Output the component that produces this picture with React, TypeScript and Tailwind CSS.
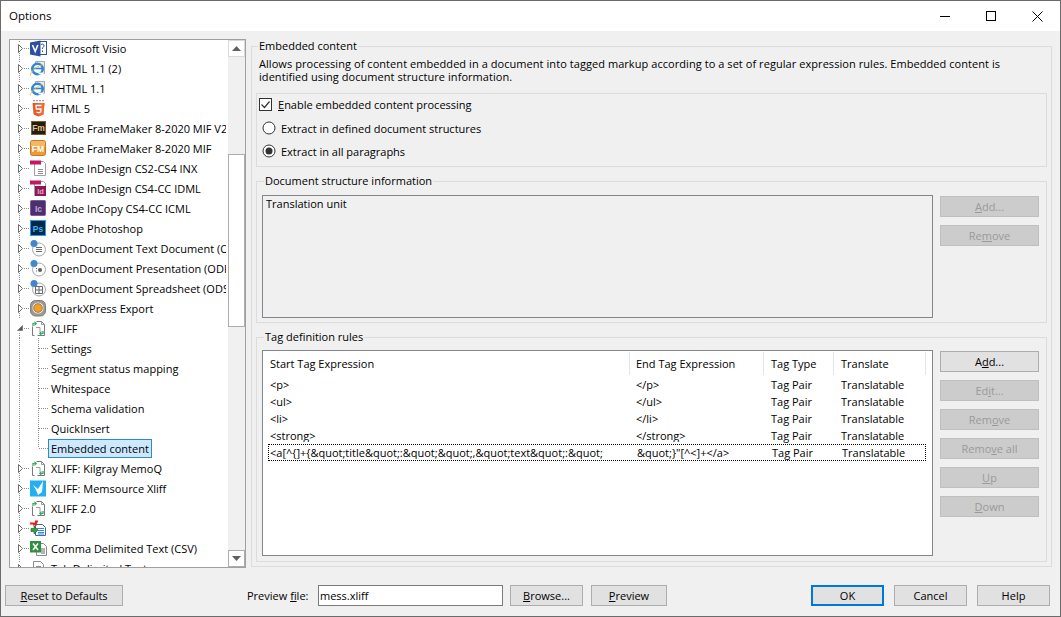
import type { ReactNode } from "react";

type IconName =
  | "visio" | "ie" | "html5" | "fmDark" | "fmOrange" | "inx" | "idml" | "incopy" | "ps"
  | "odt" | "odp" | "ods" | "quark" | "xliff" | "memsource" | "pdf" | "csv" | "tab";

type TreeRow = { label: string; icon?: IconName; open?: boolean; last?: boolean; selected?: boolean };

const treeRows: TreeRow[] = [
  { label: "Microsoft Visio", icon: "visio" },
  { label: "XHTML 1.1 (2)", icon: "ie" },
  { label: "XHTML 1.1", icon: "ie" },
  { label: "HTML 5", icon: "html5" },
  { label: "Adobe FrameMaker 8-2020 MIF V2", icon: "fmDark" },
  { label: "Adobe FrameMaker 8-2020 MIF", icon: "fmOrange" },
  { label: "Adobe InDesign CS2-CS4 INX", icon: "inx" },
  { label: "Adobe InDesign CS4-CC IDML", icon: "idml" },
  { label: "Adobe InCopy CS4-CC ICML", icon: "incopy" },
  { label: "Adobe Photoshop", icon: "ps" },
  { label: "OpenDocument Text Document (ODT)", icon: "odt" },
  { label: "OpenDocument Presentation (ODP)", icon: "odp" },
  { label: "OpenDocument Spreadsheet (ODS)", icon: "ods" },
  { label: "QuarkXPress Export", icon: "quark" },
  { label: "XLIFF", icon: "xliff", open: true },
  { label: "Settings" },
  { label: "Segment status mapping" },
  { label: "Whitespace" },
  { label: "Schema validation" },
  { label: "QuickInsert" },
  { label: "Embedded content", last: true, selected: true },
  { label: "XLIFF: Kilgray MemoQ", icon: "xliff" },
  { label: "XLIFF: Memsource Xliff", icon: "memsource" },
  { label: "XLIFF 2.0", icon: "xliff" },
  { label: "PDF", icon: "pdf" },
  { label: "Comma Delimited Text (CSV)", icon: "csv" },
  { label: "Tab Delimited Text", icon: "tab" },
];

const tagRows = [
  ["<p>", "</p>"],
  ["<ul>", "</ul>"],
  ["<li>", "</li>"],
  ["<strong>", "</strong>"],
  ['<a[^{]+{&quot;title&quot;:&quot;&quot;,&quot;text&quot;:&quot;', '&quot;}"[^<]+</a>'],
];

const columns = "grid grid-cols-[362px_134px_70px_92px]";

function Dots({ d }: { d: string }) {
  return <path d={d} stroke="#8f8f8f" strokeDasharray="1 1" fill="none" shapeRendering="crispEdges" />;
}

function FileIcon({ name }: { name: IconName }) {
  const odfBase = (
    <>
      <circle cx="9" cy="9.500" r="6.500" fill="#fbfbfb" stroke="#a8a8a8" />
      <circle cx="4" cy="3.500" r="3.500" fill="#3f88cf" />
    </>
  );

  let body: ReactNode = null;
  switch (name) {
    case "visio":
      body = (
        <>
          <rect x="9" y="1.500" width="7.500" height="13" fill="#fff" stroke="#2f5597" />
          <path d="M11 4.500c2-1 3.500 0 3 1.500s-1.500 1-1.500 3M12.500 10.500v1.500" fill="none" stroke="#2f5597" />
          <path d="M0 2.500l10.500-2v16L0 14.500z" fill="#2c4f9f" />
          <path d="M2.500 5l2.700 6.500L7.800 5" fill="none" stroke="#fff" strokeWidth="1.600" />
        </>
      );
      break;
    case "ie":
      body = (
        <>
          <path d="M5.500 1.500h9v12h-9z" fill="#ececec" stroke="#a8a8a8" />
          <circle cx="7.500" cy="9" r="5.200" fill="#fff" stroke="#2e86d8" strokeWidth="2.600" />
          <path d="M3.500 8.500h8.500" stroke="#2e86d8" strokeWidth="1.600" />
          <path d="M8.500 13.500h5" stroke="#fff" strokeWidth="1.800" />
          <path d="M.5 15.500c-1-3 6-9 12-11" fill="none" stroke="#e8b93c" strokeWidth="0.900" />
        </>
      );
      break;
    case "html5":
      body = (
        <>
          <path d="M3 .5h11" stroke="#9a9a9a" strokeWidth="1.400" strokeDasharray="2 1" />
          <path d="M2.500 3h12l-1.100 11.500-5 2-4.800-2z" fill="#e4572b" />
          <path d="M8.500 3h6l-1.100 11.500-4.900 2z" fill="#f26a35" />
          <path d="M11.500 5.500H6l.3 3.500h4.700l-.3 3-2.200.8-2.200-.8" fill="none" stroke="#fff" strokeWidth="1.300" />
        </>
      );
      break;
    case "fmDark":
      body = (
        <>
          <rect x="1.500" y="1.500" width="14" height="13" fill="#2b1c07" stroke="#70603c" />
          <text x="8.500" y="11.300" textAnchor="middle" fontSize="8.500" fontWeight="700" fill="#d8c48f" fontFamily="Liberation Sans, sans-serif">Fm</text>
        </>
      );
      break;
    case "fmOrange":
      body = (
        <>
          <rect x="0.500" y="0.500" width="15" height="15" rx="2" fill="#ee9a35" stroke="#c87a1f" />
          <rect x="1" y="1" width="14" height="6" rx="1.500" fill="#f6b765" />
          <text x="8" y="11.500" textAnchor="middle" fontSize="8.500" fontWeight="700" fill="#fff" fontFamily="Liberation Sans, sans-serif">FM</text>
        </>
      );
      break;
    case "inx":
      body = (
        <>
          <path d="M4.500 1.500h9l2 2v12h-11z" fill="#fff" stroke="#a0a0a0" />
          <rect x="0" y="0.500" width="11" height="4" fill="#c2185f" />
          <path d="M8 9.500h5M8 11.500h5M8 13.500h5" stroke="#8e8e8e" />
        </>
      );
      break;
    case "idml":
      body = (
        <>
          <path d="M4.500 1.500h9l2 2v12h-11z" fill="#fff" stroke="#a0a0a0" />
          <rect x="0" y="0.500" width="11" height="4" fill="#c2185f" />
          <rect x="5" y="6" width="11" height="10" fill="#8c1a58" />
          <text x="10.500" y="14" textAnchor="middle" fontSize="7.500" fontWeight="700" fill="#f0a0c8" fontFamily="Liberation Sans, sans-serif">Id</text>
        </>
      );
      break;
    case "incopy":
      body = (
        <>
          <rect x="0.500" y="0.500" width="15" height="15" rx="1" fill="#4d2f6e" stroke="#7a5f96" />
          <text x="8.500" y="11.500" textAnchor="middle" fontSize="8.500" fontWeight="700" fill="#bba6d6" fontFamily="Liberation Sans, sans-serif">Ic</text>
        </>
      );
      break;
    case "ps":
      body = (
        <>
          <rect x="0.500" y="0.500" width="15" height="15" fill="#04263f" stroke="#18a0fb" />
          <text x="8" y="11.500" textAnchor="middle" fontSize="8.500" fontWeight="700" fill="#38b6ff" fontFamily="Liberation Sans, sans-serif">Ps</text>
        </>
      );
      break;
    case "odt":
      body = (
        <>
          {odfBase}
          <path d="M6 7.500h6M6 9.500h6M6 11.500h6" stroke="#6b6b6b" />
        </>
      );
      break;
    case "odp":
      body = (
        <>
          {odfBase}
          <circle cx="10" cy="10" r="2" fill="#5d5d5d" />
          <path d="M6 8.500h1M6 11h1" stroke="#6b6b6b" />
        </>
      );
      break;
    case "ods":
      body = (
        <>
          {odfBase}
          <path d="M5.500 6.500h7v7h-7zM5.500 10h7M9 6.500v7" fill="none" stroke="#6b6b6b" />
        </>
      );
      break;
    case "quark":
      body = (
        <>
          <rect x="0.500" y="0.500" width="15" height="15.500" rx="5" fill="#9a9a9a" stroke="#7c7c7c" />
          <circle cx="8" cy="8" r="5.500" fill="#f4f4f4" />
          <circle cx="8" cy="8" r="4.300" fill="#ef9f2e" stroke="#b8741a" />
        </>
      );
      break;
    case "xliff":
      body = (
        <>
          <path d="M6.500 1.500h5l3 3v11H7.500M4.500 15.500h-2V6.500" fill="none" stroke="#7a7a7a" />
          <path d="M11.500 1.500v3h3M6 7.500h4v5" fill="none" stroke="#9a9a9a" />
          <path d="M3 6V3.500h1.500" fill="none" stroke="#25a55a" strokeWidth="1.200" />
          <path d="M4.500 1l2.500 2.500L4.500 6z" fill="#25a55a" />
          <path d="M13 11v2.500h-1.500" fill="none" stroke="#25a55a" strokeWidth="1.200" />
          <path d="M11.500 11L9 13.500l2.500 2.500z" fill="#25a55a" />
        </>
      );
      break;
    case "memsource":
      body = (
        <>
          <rect x="0" y="0.500" width="16" height="16" fill="#22b0f0" />
          <path d="M3 5l5 4 5-8-1 11-4 3-2-5z" fill="#fff" />
        </>
      );
      break;
    case "pdf":
      body = (
        <>
          <path d="M5.500 4.500h7l3 3v8h-10z" fill="#fff" stroke="#2f6fb5" />
          <path d="M7 8.500h7M8 10.500h6M8 12.500h6M8 14h6" stroke="#3d86cf" />
          <path d="M0 2.500h5V.5h3v2h-1v3h-4v-1h-3z" fill="#e8211d" />
          <path d="M1 8.500h3V6l4 4-4 4v-2.500h-3z" fill="#2fa23a" stroke="#17611f" strokeWidth="0.600" />
        </>
      );
      break;
    case "csv":
      body = (
        <>
          <path d="M6.500 3.500h7l3 3v9h-10z" fill="#fff" stroke="#8a8a8a" />
          <path d="M11 9h4M11 11h4M11 13h4" stroke="#666" />
          <rect x="0" y="1" width="11" height="11.500" fill="#2f8f3e" />
          <path d="M3 3.500l5 6.500M8 3.500l-5 6.500" stroke="#fff" strokeWidth="1.500" />
        </>
      );
      break;
    case "tab":
      body = (
        <>
          <path d="M3.500 1.500h7l3 3v11h-10z" fill="#fff" stroke="#8a8a8a" />
          <path d="M6 6.500h5M6 8.500h5M6 10.500h5M6 12.500h5" stroke="#8a8a8a" />
        </>
      );
      break;
  }
  return (
    <svg width="17" height="17" viewBox="0 0 17 17" className="shrink-0">
      {body}
    </svg>
  );
}

function Connector({ open }: { open?: boolean }) {
  return (
    <svg width="20" height="20" viewBox="0 0 20 20" className="shrink-0">
      {!open && <Dots d="M9.500 1V5" />}
      <Dots d="M9.500 15V20" />
      <Dots d="M14 10.500H20" />
      {open ? (
        <path d="M7.500 12.500h5v-5z" fill="#595959" stroke="#595959" strokeWidth="0.500" />
      ) : (
        <path d="M8.500 6.500l4 4-4 4z" fill="#fff" stroke="#6f6f6f" />
      )}
    </svg>
  );
}

function ChildConnector({ last }: { last?: boolean }) {
  return (
    <svg width="38" height="20" viewBox="0 0 38 20" className="shrink-0">
      <Dots d="M9.500 0V20" />
      <Dots d={last ? "M28.500 0V10" : "M28.500 0V20"} />
      <Dots d="M29 10.500H38" />
    </svg>
  );
}

function Tree() {
  return (
    <div className="flex h-[529px] w-[237px] shrink-0 overflow-hidden border border-[#a0a0a0] bg-white">
      <div className="-mt-[2px] h-[540px] w-[216px] shrink-0 overflow-hidden whitespace-nowrap">
        {treeRows.map((row) => (
          <div key={row.label} className="flex h-5 items-center">
            {row.icon ? (
              <>
                <Connector open={row.open} />
                <FileIcon name={row.icon} />
                <span className="ml-1">{row.label}</span>
              </>
            ) : (
              <>
                <ChildConnector last={row.last} />
                <span className={row.selected ? "flex h-[19px] items-center border border-[#2a8ad4] bg-[#cde8ff] px-[2px]" : "px-[3px]"}>
                  {row.label}
                </span>
              </>
            )}
          </div>
        ))}
      </div>
      <div className="ml-[2px] flex w-[17px] shrink-0 flex-col bg-[#f0f0f0]">
        <div className="flex h-[17px] items-center justify-center border border-[#d9d9d9] bg-white">
          <svg width="9" height="5" viewBox="0 0 9 5"><path d="M0 5l4.500-5 4.500 5z" fill="#606060" /></svg>
        </div>
        <div className="h-[97px]" />
        <div className="h-[173px] border border-[#adadad] bg-white" />
        <div className="flex-1" />
        <div className="flex h-[17px] items-center justify-center border border-[#adadad] bg-white">
          <svg width="9" height="5" viewBox="0 0 9 5"><path d="M0 0l4.500 5 4.500-5z" fill="#606060" /></svg>
        </div>
      </div>
    </div>
  );
}

function Btn({ children, disabled, primary, className = "" }: { children: ReactNode; disabled?: boolean; primary?: boolean; className?: string }) {
  const look = disabled
    ? "border-[#bfbfbf] bg-[#cccccc] text-[#9a9a9a]"
    : primary
      ? "border-2 border-[#0078d7] bg-[#e1e1e1] text-black"
      : "border-[#adadad] bg-[#e1e1e1] text-black";
  return <div className={`flex h-[21px] shrink-0 items-center justify-center border ${look} ${className}`}>{children}</div>;
}

function SideButtons({ items }: { items: { node: ReactNode; disabled?: boolean }[] }) {
  return (
    <div className="mt-px flex w-[99px] shrink-0 flex-col gap-2">
      {items.map((item, i) => (
        <Btn key={i} disabled={item.disabled}>{item.node}</Btn>
      ))}
    </div>
  );
}

function Group({ title, className, children }: { title: string; className: string; children: ReactNode }) {
  return (
    <fieldset className={`border border-[#dcdcdc] ${className}`}>
      <legend className="ml-[7px] h-[15px] px-px">{title}</legend>
      {children}
    </fieldset>
  );
}

function Radio({ checked, label }: { checked?: boolean; label: string }) {
  return (
    <div className="ml-[5px] flex h-[14px] items-center gap-[5px]">
      <svg width="14" height="14" viewBox="0 0 14 14" className="shrink-0">
        <circle cx="7" cy="7" r="6" fill="#fff" stroke="#333" />
        {checked && <circle cx="7" cy="7" r="3.500" fill="#333" />}
      </svg>
      <span>{label}</span>
    </div>
  );
}

function RulesTable() {
  return (
    <div className="h-[206px] w-[671px] shrink-0 overflow-hidden border border-[#82878c] bg-white">
      <div className={`${columns} ml-[5px] h-[25px]`}>
        {["Start Tag Expression", "End Tag Expression", "Tag Type", "Translate"].map((h, i) => (
          <div key={h} className={`mt-px flex h-[23px] items-center border-r border-[#e5e5e5] ${i === 0 ? "pl-[2px]" : i === 1 ? "pl-[6px]" : "pl-[7px]"}`}>
            {h}
          </div>
        ))}
      </div>
      {tagRows.map(([start, end], i) => (
        <div
          key={start}
          className={`${columns} ml-[5px] h-[17px] w-[658px] items-center whitespace-nowrap ${i === 4 ? "border border-dotted border-black" : ""}`}
        >
          <div className={`overflow-hidden ${i === 4 ? "pl-px" : "pl-[2px]"}`}>{start}</div>
          <div className="overflow-hidden pl-[6px]">{end}</div>
          <div className="pl-[7px]">Tag Pair</div>
          <div className="pl-[7px]">Translatable</div>
        </div>
      ))}
    </div>
  );
}

export default function App() {
  return (
    <div className="flex h-[617px] w-[1061px] flex-col overflow-hidden border border-[#6b6b6b] bg-[#f0f0f0] font-['Open_Sans','Noto_Sans',sans-serif] text-[11px] leading-[13px] text-black">
      {/* title bar */}
      <div className="flex h-[30px] shrink-0 items-center bg-white pl-2">
        <span className="mb-[2px] text-[11.5px]">Options</span>
        <div className="ml-auto flex">
          <div className="flex h-[28px] w-[46px] items-center justify-center">
            <svg width="10" height="10" viewBox="0 0 10 10"><path d="M0 5.500h10" stroke="#000" shapeRendering="crispEdges" /></svg>
          </div>
          <div className="flex h-[28px] w-[46px] items-center justify-center">
            <svg width="10" height="10" viewBox="0 0 10 10"><rect x="0.500" y="0.500" width="9" height="9" fill="none" stroke="#000" shapeRendering="crispEdges" /></svg>
          </div>
          <div className="flex h-[28px] w-[46px] items-center justify-center">
            <svg width="11" height="11" viewBox="0 0 11 11"><path d="M.5.500l10 10M10.500.500l-10 10" stroke="#000" /></svg>
          </div>
        </div>
      </div>

      <div className="flex h-[538px] shrink-0 pl-2 pt-2">
        <Tree />

        <fieldset className="ml-[5px] h-[528px] w-[801px] shrink-0 border border-[#dcdcdc] px-1">
          <legend className="ml-[2px] h-[15px] px-px">Embedded content</legend>
          <p className="ml-[3px] mt-[3px] w-[770px] tracking-[0.06px]">
            Allows processing of content embedded in a document into tagged markup according to a set of regular expression rules. Embedded content is identified using document structure information.
          </p>

          <div className="mt-[10px] flex h-[74px] flex-col border border-[#dcdcdc]">
            <div className="ml-[2px] mt-[3px] flex h-[14px] items-center gap-[6px]">
              <svg width="13" height="13" viewBox="0 0 13 13" className="shrink-0">
                <rect x="0.500" y="0.500" width="12" height="12" fill="#fff" stroke="#333" />
                <path d="M2.500 6.500l3 3 5-6" fill="none" stroke="#333" strokeWidth="1.200" />
              </svg>
              <span><u>E</u>nable embedded content processing</span>
            </div>
            <div className="mt-[10px]"><Radio label="Extract in defined document structures" /></div>
            <div className="mt-[9px]"><Radio checked label="Extract in all paragraphs" /></div>
          </div>

          <Group title="Document structure information" className="mt-[7px] h-[149px]">
            <div className="mt-[6px] flex gap-[7px] pl-[5px]">
              <div className="h-[123px] w-[671px] shrink-0 border border-[#82878c] bg-[#f0f0f0] px-[3px] pt-px">Translation unit</div>
              <SideButtons
                items={[
                  { node: <><u>A</u>dd...</>, disabled: true },
                  { node: <>Re<u>m</u>ove</>, disabled: true },
                ]}
              />
            </div>
          </Group>

          <Group title="Tag definition rules" className="mt-[7px] h-[232px]">
            <div className="mt-[5px] flex gap-[7px] pl-[5px]">
              <RulesTable />
              <SideButtons
                items={[
                  { node: <>A<u>d</u>d...</> },
                  { node: <>Ed<u>i</u>t...</>, disabled: true },
                  { node: <>Rem<u>o</u>ve</>, disabled: true },
                  { node: <>Remo<u>v</u>e all</>, disabled: true },
                  { node: <><u>U</u>p</>, disabled: true },
                  { node: <><u>D</u>own</>, disabled: true },
                ]}
              />
            </div>
          </Group>
        </fieldset>
      </div>

      <div className="flex h-[47px] shrink-0 items-start pl-1 pr-[10px] pt-4">
        <Btn className="w-[118px]"><span><u>R</u>eset to Defaults</span></Btn>
        <div className="ml-[124px] flex h-[21px] w-[71px] shrink-0 items-center"><span>Preview <u>f</u>ile:</span></div>
        <div className="flex h-[21px] w-[185px] shrink-0 items-center border border-[#7a7a7a] bg-white px-px">mess.xliff</div>
        <Btn className="ml-[7px] w-[73px]"><span><u>B</u>rowse...</span></Btn>
        <Btn className="ml-2 w-[76px]"><span><u>P</u>review</span></Btn>
        <Btn primary className="ml-auto w-[73px]">OK</Btn>
        <Btn className="ml-[10px] w-[73px]">Cancel</Btn>
        <Btn className="ml-[10px] w-[73px]">Help</Btn>
      </div>
    </div>
  );
}
